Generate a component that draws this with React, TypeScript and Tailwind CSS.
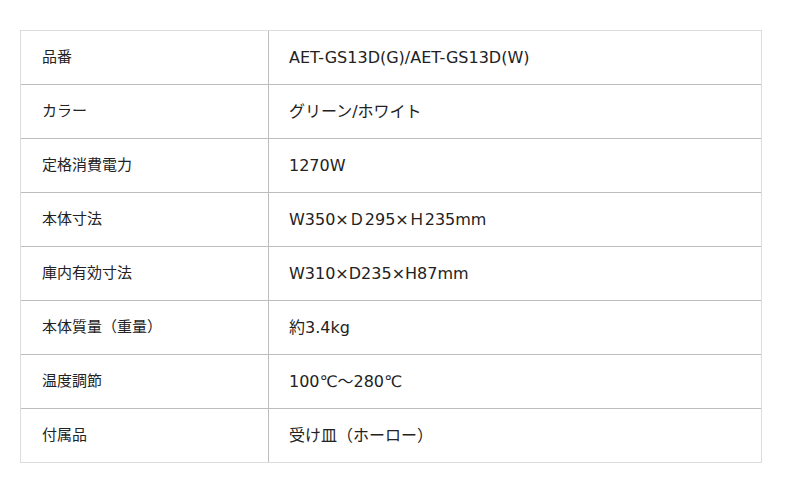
import React from 'react';

const specs: [string, string][] = [
  ['品番', 'AET-GS13D(G)/AET-GS13D(W)'],
  ['カラー', 'グリーン/ホワイト'],
  ['定格消費電力', '1270W'],
  ['本体寸法', 'W350×Ｄ295×Ｈ235mm'],
  ['庫内有効寸法', 'W310×D235×H87mm'],
  ['本体質量（重量）', '約3.4kg'],
  ['温度調節', '100℃～280℃'],
  ['付属品', '受け皿（ホーロー）'],
];

export default function App() {
  return (
    <div className="w-[800px] h-[493px] bg-white pt-[30px] pl-[20px] font-['DejaVu_Sans','Noto_Sans_CJK_JP',sans-serif]">
      <div className="w-[742px] border border-[#dcdcdc]">
        {specs.map(([label, value], i) => (
          <div
            key={i}
            className={`flex text-[15px] text-[#222] ${i > 0 ? 'h-[54px] border-t border-[#bdbdbd]' : 'h-[53px]'}`}
          >
            <div className="w-[248px] flex items-center pl-[21px] border-r border-[#bdbdbd]">{label}</div>
            <div className="flex-1 flex items-center pl-[20px] text-[16px]">{value}</div>
          </div>
        ))}
      </div>
    </div>
  );
}
